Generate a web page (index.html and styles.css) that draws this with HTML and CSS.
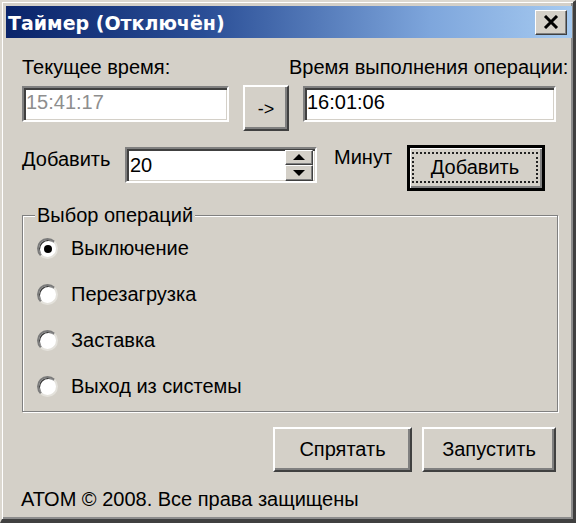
FILE: index.html
```html
<!DOCTYPE html>
<html lang="ru">
<head>
<meta charset="utf-8">
<title>Таймер</title>
<link rel="stylesheet" href="styles.css">
</head>
<body>
<div class="window">
  <div class="titlebar">
    <span class="title">Таймер (Отключён)</span>
    <span class="close"><svg width="16" height="14" viewBox="0 0 16 14"><path d="M2 1 L14 13 M14 1 L2 13" stroke="#000" stroke-width="3"/></svg></span>
  </div>
  <div class="content">
    <div class="times">
      <div class="lbl lbl-cur">Текущее время:</div>
      <div class="lbl lbl-op">Время выполнения операции:</div>
      <div class="field field-cur disabled">15:41:17</div>
      <div class="btn btn-arrow">-&gt;</div>
      <div class="field field-op">16:01:06</div>
    </div>
    <div class="addrow">
      <span class="lbl lbl-add">Добавить</span>
      <div class="field spin">
        <span class="spin-val">20</span>
        <span class="spin-btns">
          <span class="spin-b"><svg width="14" height="8" viewBox="0 0 14 8"><path d="M7 1 L13 7 L1 7 Z" fill="#000"/></svg></span>
          <span class="spin-b"><svg width="14" height="8" viewBox="0 0 14 8"><path d="M1 1 L13 1 L7 7 Z" fill="#000"/></svg></span>
        </span>
      </div>
      <span class="lbl lbl-min">Минут</span>
      <div class="btn btn-default"><span class="focus">Добавить</span></div>
    </div>
    <div class="group">
      <div class="legend">Выбор операций</div>
      <div class="radios">
        <div class="radio"><span class="rb checked"></span><span>Выключение</span></div>
        <div class="radio"><span class="rb"></span><span>Перезагрузка</span></div>
        <div class="radio"><span class="rb"></span><span>Заставка</span></div>
        <div class="radio"><span class="rb"></span><span>Выход из системы</span></div>
      </div>
    </div>
    <div class="actions">
      <div class="btn btn-act btn-hide">Спрятать</div>
      <div class="btn btn-act btn-run">Запустить</div>
    </div>
    <div class="footer">АТОМ © 2008. Все права защищены</div>
  </div>
</div>
</body>
</html>
```
FILE: styles.css
```css
html, body {
  margin: 0;
  padding: 0;
  background: #d4d0c8;
}
body {
  font-family: "Liberation Sans", Arial, sans-serif;
  font-size: 20px;
  line-height: 24px;
  color: #000;
}
.window {
  width: 576px;
  height: 523px;
  box-sizing: border-box;
  background: #d4d0c8;
  border-style: solid;
  border-width: 2px 3px 4px 2px;
  border-color: #dcd8d0 #404040 #404040 #dcd8d0;
  box-shadow: inset 1px 1px 0 #fff, inset -2px -2px 0 #8c8c8c;
  padding: 4px 1px 0 4px;
  overflow: hidden;
}
.titlebar {
  height: 32px;
  background: linear-gradient(to right, #0a246a 0%, #2a4e96 35%, #7ea6dc 75%, #a6caf0 100%);
  display: flex;
  align-items: center;
  justify-content: space-between;
  padding: 0 5px 0 2px;
}
.title {
  color: #fff;
  font-family: "DejaVu Sans", sans-serif;
  font-weight: bold;
  font-size: 19px;
  padding-top: 1px;
}
.close {
  width: 32px;
  height: 25px;
  box-sizing: border-box;
  background: #d4d0c8;
  border: 1px solid;
  border-color: #fff #404040 #404040 #fff;
  box-shadow: inset -1px -1px 0 #808080;
  display: flex;
  align-items: center;
  justify-content: center;
}
.content {
  padding: 17px 0 0 16px;
}
.times {
  display: grid;
  grid-template-columns: 207px 46px 253px;
  column-gap: 14px;
  row-gap: 6px;
  align-items: start;
}
.lbl {
  white-space: nowrap;
}
.lbl-cur { grid-column: 1; grid-row: 1; }
.lbl-op { grid-column: 2 / span 2; grid-row: 1; margin-left: 46px; }
.field {
  box-sizing: border-box;
  background: #fff;
  border: 2px solid;
  border-color: #808080 #fff #fff #808080;
  box-shadow: inset 2px 2px 0 #404040, inset -1px -1px 0 #d4d0c8;
  padding: 2px 3px 0 2px;
  white-space: nowrap;
}
.field-cur { grid-column: 1; grid-row: 2; height: 36px; margin-top: 1px; }
.field-op { grid-column: 3; grid-row: 2; height: 36px; margin-top: 1px; }
.disabled { color: #8e8e8e; }
.btn {
  box-sizing: border-box;
  background: #d4d0c8;
  border: 2px solid;
  border-color: #fff #404040 #404040 #fff;
  box-shadow: inset -2px -2px 0 #808080;
  display: flex;
  align-items: center;
  justify-content: center;
  white-space: nowrap;
}
.btn-arrow { grid-column: 2; grid-row: 2; height: 46px; font-size: 18px; padding-top: 1px; }
.addrow {
  display: grid;
  grid-template-columns: 103px 192px 90px 138px;
  align-items: start;
  margin-top: 14px;
}
.lbl-add { margin-top: 2px; }
.spin {
  height: 36px;
  margin-top: 2px;
  padding: 0 2px 0 3px;
  display: flex;
  align-items: center;
  justify-content: space-between;
}
.spin-btns {
  display: flex;
  flex-direction: column;
  width: 28px;
  height: 31px;
}
.spin-b {
  flex: 1;
  background: #d4d0c8;
  border: 1px solid;
  border-color: #fff #404040 #404040 #fff;
  box-shadow: inset -1px -1px 0 #808080;
  display: flex;
  align-items: center;
  justify-content: center;
}
.lbl-min { padding-left: 17px; margin-top: 0; }
.btn-default {
  height: 46px;
  border: 3px solid #000;
  box-shadow: inset 1px 1px 0 #fff, inset -2px -2px 0 #808080;
  align-items: stretch;
  justify-content: stretch;
}
.focus {
  flex: 1;
  margin: 4px 4px 5px 2px;
  border: 2px dotted #222;
  display: flex;
  align-items: center;
  justify-content: center;
  padding-bottom: 1px;
}
.group {
  width: 536px;
  height: 197px;
  box-sizing: border-box;
  margin-top: 24px;
  border: 1px solid #808080;
  box-shadow: inset 1px 1px 0 #fff, 1px 1px 0 #fff;
  padding: 0 0 0 14px;
}
.legend {
  display: table;
  margin: -13px 0 0 -2px;
  padding: 0 2px;
  background: #d4d0c8;
}
.radios {
  margin-top: -2px;
}
.radio {
  display: flex;
  align-items: center;
  height: 46px;
  gap: 13px;
}
.rb {
  width: 21px;
  height: 21px;
  box-sizing: border-box;
  border-radius: 50%;
  background: #fff;
  border: 2px solid;
  border-color: #7a7a7a #e4e2dc #e4e2dc #7a7a7a;
  box-shadow: inset 1px 1px 0 #3a3a3a;
  display: flex;
  align-items: center;
  justify-content: center;
}
.rb.checked::after {
  content: "";
  width: 8px;
  height: 8px;
  border-radius: 50%;
  background: #000;
  margin: 1px 0 0 1px;
}
.actions {
  display: flex;
  justify-content: flex-end;
  gap: 10px;
  width: 534px;
  margin-top: 15px;
}
.btn-act { height: 45px; padding-bottom: 1px; }
.btn-hide { width: 139px; }
.btn-run { width: 134px; }
.footer {
  margin-top: 15px;
  margin-left: -1px;
}
```
